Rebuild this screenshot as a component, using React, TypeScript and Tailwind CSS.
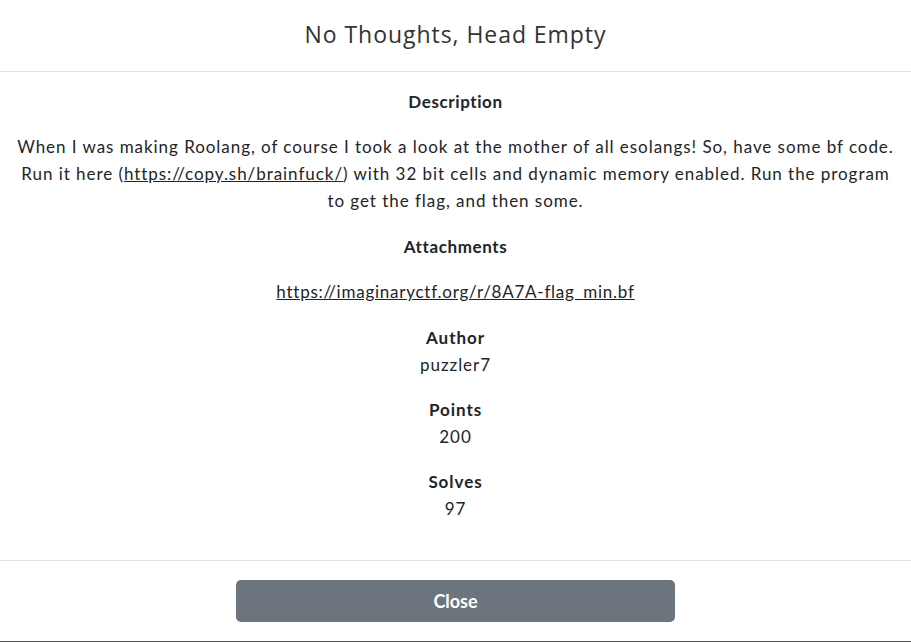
import React from 'react'

const body = { fontFamily: 'Lato, "Noto Sans", sans-serif' }

function Field({ label, value }: { label: string; value: React.ReactNode }) {
  return (
    <div className="mb-[18px]">
      <div className="font-bold">{label}</div>
      <div>{value}</div>
    </div>
  )
}

export default function App() {
  return (
    <div className="h-[642px] w-[911px] bg-white flex flex-col text-[#212529]" style={body}>
      {/* Header */}
      <div className="h-[72px] shrink-0 border-b border-[#dee2e6] flex items-center justify-center">
        <h5
          className="text-[23px] text-[#333] tracking-[0.95px] -mt-[2px]"
          style={{ fontFamily: '"Open Sans", "Noto Sans", sans-serif' }}>
          No Thoughts, Head Empty
        </h5>
      </div>

      {/* Body */}
      <div className="flex-1 px-4 pt-4 text-center text-[17px] leading-[27px] tracking-[0.95px]">
        <div className="font-bold mb-[18px] tracking-[0.6px]">Description</div>
        <p className="mb-[19px]">
          When I was making Roolang, of course I took a look at the mother of all esolangs! So, have some bf code.
          <br />
          Run it here (<a className="underline" href="#">https://copy.sh/brainfuck/</a>) with 32 bit cells and dynamic memory enabled. Run the program
          <br />
          to get the flag, and then some.
        </p>
        <div className="font-bold mb-[18px] tracking-[0.6px]">Attachments</div>
        <p className="mb-[19px] tracking-[0.75px]">
          <a className="underline" href="#">https://imaginaryctf.org/r/8A7A-flag_min.bf</a>
        </p>
        <Field label="Author" value="puzzler7" />
        <Field label="Points" value="200" />
        <Field label="Solves" value="97" />
      </div>

      {/* Footer */}
      <div className="h-[81px] shrink-0 border-t border-[#dee2e6] flex items-center justify-center">
        <button className="w-[439px] h-[42px] rounded-[5px] bg-[#6c757d] text-white text-[18px] font-bold">
          Close
        </button>
      </div>
      <div className="h-px shrink-0 bg-[#555]" />
    </div>
  )
}
